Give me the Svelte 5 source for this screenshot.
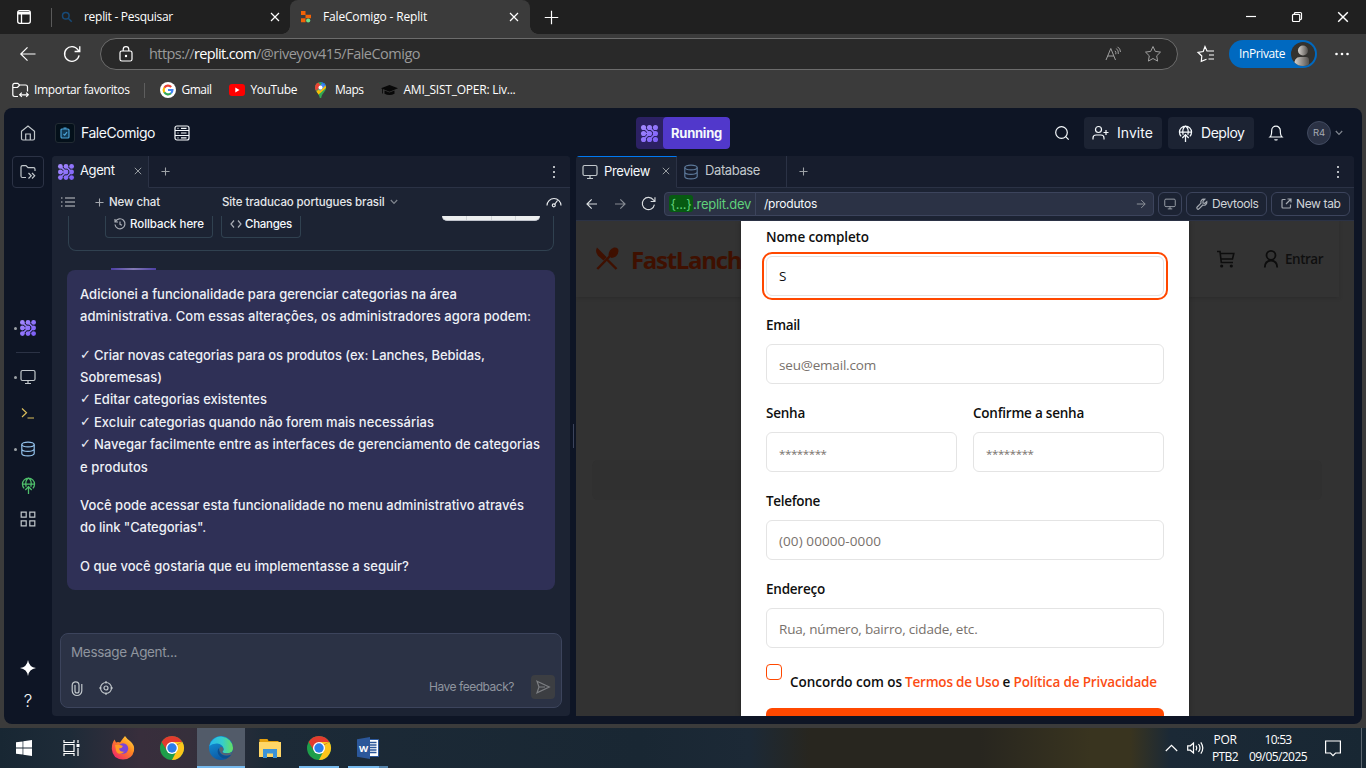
<script>
  // Spreads the letters of a label so that it fills the given width.
  function fit(node, width) {
    if (!width) return;
    node.style.letterSpacing = '0px';
    const natural = node.getBoundingClientRect().width;
    node.style.letterSpacing = `${(width - natural) / [...node.textContent].length}px`;
  }

  const message = [
    [
      ['Adicionei a funcionalidade para gerenciar categorias na área', 377],
      ['administrativa. Com essas alterações, os administradores agora podem:', 451],
    ],
    [
      ['Criar novas categorias para os produtos (ex: Lanches, Bebidas,', 391, true],
      ['Sobremesas)', 82],
      ['Editar categorias existentes', 173, true],
      ['Excluir categorias quando não forem mais necessárias', 340, true],
      ['Navegar facilmente entre as interfaces de gerenciamento de categorias', 446, true],
      ['e produtos', 68],
    ],
    [
      ['Você pode acessar esta funcionalidade no menu administrativo através', 444],
      ['do link "Categorias".', 126],
    ],
    [['O que você gostaria que eu implementasse a seguir?', 329]],
  ];
</script>

{#snippet t(text, width, cls = '')}<span class="t {cls}" use:fit={width}>{text}</span>{/snippet}

{#snippet cross(size)}
  <svg class="ln" width={size} height={size} viewBox="0 0 10 10"><path d="M1 1l8 8M9 1l-8 8" /></svg>
{/snippet}

{#snippet plus(size)}
  <svg class="ln" width={size} height={size} viewBox="0 0 10 10"><path d="M5 .5v9M.5 5h9" /></svg>
{/snippet}

{#snippet agent(size)}
  <svg width={size} height={size} viewBox="0 0 16 16" fill="url(#ag)" stroke="url(#ag)">
    <defs><linearGradient id="ag" gradientUnits="userSpaceOnUse" x1="0" y1="0" x2="16" y2="16"><stop stop-color="#a68cff" /><stop offset="1" stop-color="#7a5cf8" /></linearGradient></defs>
    <path fill="none" stroke-width="1.500" d="M2.400 2.400L8 8l-5.600 5.600M8 2.400L13.600 8 8 13.600M2.400 8H8" />
    <g stroke="none">
      {#each [2.4, 8, 13.6] as y}{#each [2.4, 8, 13.6] as x}<circle cx={x} cy={y} r="2.4" />{/each}{/each}
    </g>
  </svg>
{/snippet}

{#snippet monitor(size)}
  <svg class="ln" width={size} height={size} viewBox="0 0 16 16"><rect x="1" y="1.5" width="14" height="10" rx="1.5" /><path d="M8 11.5v3M5 14.5h6" /></svg>
{/snippet}

{#snippet database(size)}
  <svg class="ln" width={size} height={size} viewBox="0 0 16 16"><ellipse cx="8" cy="3.5" rx="6.2" ry="2.4" /><path d="M1.800 3.500v9c0 1.300 2.800 2.400 6.200 2.400s6.200-1.100 6.200-2.400v-9M1.800 8c0 1.300 2.800 2.400 6.200 2.400s6.200-1.100 6.200-2.400" /></svg>
{/snippet}

{#snippet deploy(size)}
  <svg class="ln" width={size} height={size} viewBox="0 0 16 16"><path d="M3.900 10.700a5.700 5.700 0 1 1 8.200 0M2.400 6.600h11.200M5.800 9.200C4.800 5.500 6 2.400 8 1c2 1.400 3.200 4.500 2.200 8.200M8 16V9M5 12.200L8 9l3 3.200" /></svg>
{/snippet}

{#snippet chevron()}
  <svg class="ln" width="8" height="6" viewBox="0 0 8 6"><path d="M.8 1l3.200 3.400L7.200 1" /></svg>
{/snippet}

{#snippet dots()}
  <svg width="4" height="14" viewBox="0 0 4 14" fill="#b6b9bf"><path d="M1 1h2v2H1zM1 6h2v2H1zM1 11h2v2H1z" /></svg>
{/snippet}

{#snippet arrow(size)}
  <svg class="ln" width={size} height={size} viewBox="0 0 12 12"><path d="M1 6h10M6.300 1.300L11 6l-4.700 4.700" /></svg>
{/snippet}

{#snippet reload(size)}
  <svg class="ln" width={size} height={size} viewBox="0 0 16 16"><path d="M14.300 9.200A6.500 6.500 0 1 1 13.200 4.200L14.800 5.800M14.900 1.200v4.600h-4.600" /></svg>
{/snippet}

{#snippet chrome()}
  <svg width="24" height="24" viewBox="0 0 24 24">
    <circle cx="12" cy="12" r="12" fill="#1e9e4a" />
    <path d="M12 12L1.600 6A12 12 0 0 1 22.400 6z" fill="#e33b2e" />
    <path d="M12 12L22.400 6A12 12 0 0 1 12 24z" fill="#fdc51b" />
    <path d="M7.200 14.700L1.600 6 12 6.200zM16.600 15L12 24 8 20z" fill="#1e9e4a" />
    <path d="M1.600 6l5.600 9L12 6z" fill="#e33b2e" />
    <path d="M12 6h10.400l-5.600 2.500z" fill="#fdc51b" />
    <circle cx="12" cy="12" r="6" fill="#fff" /><circle cx="12" cy="12" r="4.700" fill="#2b7de9" />
  </svg>
{/snippet}

<div class="screen">
  <div class="strip">
    <svg class="ws" width="16" height="16" viewBox="0 0 16 16" fill="none" stroke="#fff" stroke-width="1.300"><rect x="1.700" y="1.700" width="12.600" height="12.600" rx="2" /><path d="M2 3.500h12M2 4.800h12M5.500 5v9" /></svg>
    <i class="vsep"></i>
    <div class="tab idle">
      <svg width="12" height="12" viewBox="0 0 12 12" fill="none" stroke="#174a78" stroke-width="1.500"><circle cx="4.800" cy="4.800" r="3.300" /><path d="M7.200 7.200l3.500 3.500" /></svg>
      {@render t('replit - Pesquisar', 89)}
      <span class="end">{@render cross(10)}</span>
    </div>
    <div class="tab active">
      <svg width="12" height="12" viewBox="0 0 12 12"><path d="M1 0h4.500v4H1zM5.500 3.800H11v3.400H5.500zM1 7.200h4.500v4H1z" fill="#f26207" /><circle cx="8.200" cy="9.500" r="2.100" fill="#6fe08a" /></svg>
      {@render t('FaleComigo - Replit', 104)}
      <span class="end">{@render cross(10)}</span>
    </div>
    <span class="newtab">{@render plus(15)}</span>
    <div class="wc">
      <span><svg class="ln" width="10" height="10" viewBox="0 0 10 10"><path d="M0 4.500h10" /></svg></span>
      <span><svg class="ln" width="10" height="10" viewBox="0 0 10 10"><rect x=".5" y="2.300" width="7.200" height="7.200" rx="1" /><path d="M2.500 2V1.500q0-1 1-1h5q1 0 1 1v5q0 1-1 1H8" /></svg></span>
      <span>{@render cross(12)}</span>
    </div>
  </div>

  <div class="toolbar">
    <svg class="ln" width="16" height="16" viewBox="0 0 16 16"><path d="M15.500 8H1M7.500 1.300L.8 8l6.700 6.700" /></svg>
    <span class="rl">{@render reload(18)}</span>
    <div class="addr">
      <svg class="ln lock" width="14" height="16" viewBox="0 0 14 16"><rect x="1" y="5" width="12" height="10" rx="1.800" /><path d="M4.200 5V3.500a2.800 2.800 0 0 1 5.600 0V5" /><circle cx="7" cy="10" r=".6" fill="#fff" /></svg>
      <div class="url">{@render t('https://', 45)}{@render t('replit.com', 62, 'host')}{@render t('/@riveyov415/FaleComigo', 164)}</div>
      <svg class="ln dim end" width="16" height="16" viewBox="0 0 16 16"><path d="M1 14L5.800 2.500 10.500 14M2.700 10h6.200M10 4.800q1.300 1.300.8 3.500M11.300 2.500q2.500 2 2 5.500M12.500 .8q3 2 3 5.200" /></svg>
      <svg class="ln dim st" width="18" height="18" viewBox="0 0 18 18"><path d="M9 1.500l2.300 4.900 5.200.7-3.800 3.700.9 5.300L9 13.500l-4.600 2.600.9-5.300L1.500 7.100l5.200-.7z" /></svg>
    </div>
    <svg class="ln fav" width="18" height="18" viewBox="0 0 18 18"><path d="M9.500 14.300L4.300 16.300l.5-5.300L1 7.300l5.200-.8L8 1.500l2 4.500h7M12 10h5M11.500 14H17" /></svg>
    <div class="inpriv">{@render t('InPrivate', 46)}
      <svg width="24" height="24" viewBox="0 0 24 24"><defs><linearGradient id="av"><stop stop-color="#d8d4cf" /><stop offset="1" stop-color="#55524f" /></linearGradient><clipPath id="avc"><circle cx="12" cy="12" r="12" /></clipPath></defs><circle cx="12" cy="12" r="12" fill="#33322f" /><g clip-path="url(#avc)" fill="url(#av)"><circle cx="12" cy="8.500" r="5" /><path d="M3 24q0-9 6-9h6q3 0 3 3v6z" /></g></svg>
    </div>
    <svg class="more" width="14" height="4" viewBox="0 0 14 4" fill="#fff"><circle cx="1.500" cy="2" r="1.300" /><circle cx="7" cy="2" r="1.300" /><circle cx="12.500" cy="2" r="1.300" /></svg>
  </div>

  <div class="marks">
    <svg class="ln" width="17" height="16" viewBox="0 0 17 16"><path d="M6 14.500H2.700Q.8 14.500 .8 12.600V3.200Q.8 1.300 2.700 1.300H5.700L7.500 3H13.500q2 0 2 2V9.500M.8 5.500h4.700L7.700 3M7.800 12.800h8.400M9.800 10.700l-2.100 2.100 2.100 2.100M14.200 10.700l2.100 2.100-2.100 2.100" /></svg>
    {@render t('Importar favoritos', 95.5, 'm1')}
    <i class="vsep"></i>
    <svg class="g" width="16" height="16" viewBox="0 0 16 16"><circle cx="8" cy="8" r="8" fill="#fff" /><g fill="none" stroke-width="2.200"><path d="M4.300 5.700A4.400 4.400 0 0 1 11.200 4.900" stroke="#ea4335" /><path d="M4.300 5.700a4.400 4.400 0 0 0 0 4.600" stroke="#fbbc05" /><path d="M4.300 10.300a4.400 4.400 0 0 0 6.700 1" stroke="#34a853" /><path d="M8 8h4.400q0 2-1.400 3.300" stroke="#4285f4" /></g></svg>
    {@render t('Gmail', 30, 'm2')}
    <svg class="yt" width="16" height="12" viewBox="0 0 16 12"><rect width="16" height="12" rx="3" fill="#f00" /><path d="M6.300 3.500v5l4.200-2.500z" fill="#fff" /></svg>
    {@render t('YouTube', 46.500, 'm2')}
    <svg class="mp" width="11" height="16" viewBox="0 0 11 16"><clipPath id="pin"><path d="M5.500 0a5.500 5.500 0 0 1 5.500 5.500C11 9.500 7 11 6.200 16H4.800C4 11 0 9.500 0 5.500A5.500 5.500 0 0 1 5.500 0z" /></clipPath><g clip-path="url(#pin)"><path fill="#34a853" d="M0 0h11v16H0z" /><path fill="#fbbc04" d="M0 11L11 0v6L3 13z" /><path fill="#4285f4" d="M3 6L11-3v6L5 9z" /><path fill="#1a73e8" d="M5 0h6v4z" /><path fill="#ea4335" d="M0 0h3l3 4-6 6z" /></g><circle cx="5.500" cy="5.500" r="2" fill="#fff" /></svg>
    {@render t('Maps', 28.500, 'm3')}
    <svg class="cap" width="17" height="12" viewBox="0 0 17 12" fill="#080808"><path d="M8.500 1L17 4.300 8.500 7.700 0 4.300z" /><path d="M3.500 6.500l5 2 5-2v3.300q-5 2.400-10 0zM1.200 4.500h.8v5h-.8z" /></svg>
    {@render t('AMI_SIST_OPER: Liv...', 112, 'm2')}
  </div>

  <div class="app">
    <header>
      <div class="hl">
        <svg class="ln" width="16" height="16" viewBox="0 0 16 16"><path d="M1.500 6.300L8 1l6.500 5.300v7.200q0 1.500-1.500 1.500H3q-1.500 0-1.500-1.500zM5.700 15V9h4.600v6" /></svg>
        <div class="logo"><svg width="10" height="12" viewBox="0 0 10 12" fill="none" stroke="#4ba3d8" stroke-width="1.200"><rect x="1" y="2" width="8" height="9" rx="1" fill="#123a55" /><path d="M3.500 1.200h3M3.500 7l1.200 1.200L7 5.200" /></svg></div>
        {@render t('FaleComigo', 74)}
        <svg class="ln srv" width="16" height="16" viewBox="0 0 16 16"><rect x="1" y="1" width="14" height="14" rx="2" /><path d="M1 5.500h14M1 10.500h14M3.500 3.300h1M7 3.300h5.500M3.500 8h1M7 8h5.500M3.500 12.800h1M7 12.800h5.500" /></svg>
      </div>
      <div class="run"><span class="ra">{@render agent(17)}</span><span class="rb">{@render t('Running', 51)}</span></div>
      <div class="hr">
        <svg class="ln" width="16" height="16" viewBox="0 0 16 16"><circle cx="7.500" cy="7.500" r="5.800" /><path d="M11.700 11.700l3 3" /></svg>
        <div class="btn inv"><svg class="ln" width="17" height="16" viewBox="0 0 17 16"><circle cx="6.500" cy="4.500" r="3" /><path d="M1 14.500v-1.500q0-3 3-3h5q3 0 3 3v1.500M14 5v5M11.500 7.500h5" /></svg>{@render t('Invite', 36)}</div>
        <div class="btn dep">{@render deploy(17)}{@render t('Deploy', 43.500)}</div>
        <svg class="ln bell" width="14" height="16" viewBox="0 0 14 16"><path d="M1 12h12q-1.700-1.500-1.700-6.500a4.300 4.300 0 0 0-8.600 0Q2.700 10.500 1 12zM5.500 14.500q1.500 1 3 0" /></svg>
        <div class="ava">{@render t('R4', 12)}</div>
        <span class="chev">{@render chevron()}</span>
      </div>
    </header>

    <div class="main">
      <nav>
        <div class="files"><svg class="ln" width="16" height="16" viewBox="0 0 16 16"><path d="M6 13.500H2.500Q1 13.500 1 12V3.200Q1 1.700 2.500 1.700H6l2 2h5.500q1.500 0 1.500 1.500V7M8.500 9l2.700 2.800-2.700 2.700M12 9l2.700 2.800-2.700 2.700" /></svg></div>
        <div class="it a dot">{@render agent(16)}</div>
        <i></i>
        <div class="it b dot">{@render monitor(16)}</div>
        <div class="it c"><svg class="ln" width="16" height="16" viewBox="0 0 16 16"><path d="M2 3.500l4.500 4.300L2 12M7.500 13H14" /></svg></div>
        <div class="it d dot">{@render database(16)}</div>
        <div class="it e">{@render deploy(17)}</div>
        <div class="it f"><svg class="ln" width="16" height="16" viewBox="0 0 16 16"><path d="M1.200 1.200h5v5h-5zM9.800 1.200h5v5h-5zM1.200 9.800h5v5h-5zM9.800 9.800h5v5h-5z" /></svg></div>
        <div class="it g2"><svg width="16" height="16" viewBox="0 0 16 16" fill="#fff"><path d="M8 0q1 7 8 8-7 1-8 8-1-7-8-8 7-1 8-8z" /></svg></div>
        <div class="it h">?</div>
      </nav>

      <section class="agent">
        <div class="ptabs">
          <div class="pt on t1">{@render agent(16)}{@render t('Agent', 34.500)}<span class="end">{@render cross(8)}</span></div>
          <div class="rest"><span class="pl">{@render plus(9)}</span><span class="end kd">{@render dots()}</span></div>
        </div>
        <div class="chatbar">
          <svg class="ln" width="14" height="12" viewBox="0 0 14 12"><path d="M0 2h1.500M4 2h10M0 6h1.500M4 6h10M0 10h1.500M4 10h10" /></svg>
          <span class="np">{@render plus(9)}</span>
          {@render t('New chat', 51)}
          {@render t('Site traducao portugues brasil', 162.500, 'title')}
          <span class="chev">{@render chevron()}</span>
          <svg class="ln end" width="16" height="12" viewBox="0 0 16 12"><path d="M1 9.500a7 7 0 0 1 14 0M8.500 8.500l3-4" /><circle cx="7.800" cy="9.300" r="1.500" /></svg>
        </div>
        <div class="feed">
          <div class="check">
            <div class="cb"><svg class="ln" width="12" height="12" viewBox="0 0 12 12"><path d="M1.500 3.500a5 5 0 1 1-.5 3M1 1v3h3M6 3.500V6.300l2 1" /></svg>{@render t('Rollback here', 74)}</div>
            <div class="cb"><svg class="ln" width="12" height="10" viewBox="0 0 12 10"><path d="M4 1.500L1 5l3 3.500M8 1.500L11 5 8 8.500" /></svg>{@render t('Changes', 47)}</div>
            <div class="shot"><i></i><i></i><i></i></div>
          </div>
          <div class="glow"></div>
          <div class="msg">
            {#each message as lines}
              <p>{#each lines as [text, width, ticked]}<span class="line">{#if ticked}<span class="tick">✓</span>{/if}{@render t(text, width)}</span>{/each}</p>
            {/each}
          </div>
        </div>
        <div class="composer">
          <div class="ph">{@render t('Message Agent...', 106)}</div>
          <div class="crow">
            <svg class="ln" width="12" height="15" viewBox="0 0 12 15"><path d="M4 4v6a2 2 0 0 0 4 0V4.200a3 3 0 0 0-6.800 0v5.500a4.800 4.800 0 0 0 9.600 0V3" /></svg>
            <svg class="ln tg" width="14" height="14" viewBox="0 0 14 14"><circle cx="7" cy="7" r="5.500" /><circle cx="7" cy="7" r="2" /><path d="M7 0v2.500M7 11.500V14M0 7h2.500M11.500 7H14" /></svg>
            {@render t('Have feedback?', 85, 'end hf')}
            <div class="send"><svg class="ln" width="14" height="14" viewBox="0 0 14 14"><path d="M1 1.200L13.300 7 1 12.800 3 7zM3 7h6" /></svg></div>
          </div>
        </div>
      </section>

      <div class="gutter"><i></i></div>

      <section class="preview">
        <div class="ptabs">
          <div class="pt on t2">{@render monitor(16)}{@render t('Preview', 46)}<span class="end">{@render cross(8)}</span></div>
          <div class="pt t3">{@render database(16)}{@render t('Database', 55)}</div>
          <div class="rest"><span class="pl">{@render plus(9)}</span><span class="end kd">{@render dots()}</span></div>
        </div>
        <div class="pbar">
          <span class="bk">{@render arrow(12)}</span>
          <span class="fw">{@render arrow(12)}</span>
          <span class="re">{@render reload(15)}</span>
          <div class="pin">
            <div class="dom"><span class="chip">{@render t('{...}', 21)}</span>{@render t('.replit.dev', 58)}</div>
            {@render t('/produtos', 53, 'path')}
            <span class="go">{@render arrow(10)}</span>
          </div>
          <div class="ob dv">{@render monitor(12)}</div>
          <div class="ob dt"><svg class="ln" width="12" height="12" viewBox="0 0 12 12"><path d="M8 1.200a3 3 0 0 0-3 4L1.200 9a1.200 1.200 0 0 0 1.800 1.800L6.800 7a3 3 0 0 0 4-3.500L8.800 5.300 7 5V3.200L8.800 1.300z" /></svg>{@render t('Devtools', 46.500)}</div>
          <div class="ob nt"><svg class="ln" width="11" height="11" viewBox="0 0 11 11"><path d="M4.500 1.500H2q-1 0-1 1v6.500q0 1 1 1h6.500q1 0 1-1V6.500M6.500 1H10v3.500M10 1L5 6" /></svg>{@render t('New tab', 44.500)}</div>
        </div>
        <div class="page">
          <div class="phead">
            <svg width="24" height="24" viewBox="0 0 24 24"><path fill="#3f1000" d="M2 .5l9.700 9.700-3.200 3.300-5.500-4.800Q-.3 5 2 .5zM13.500 8.500q0-6 5.500-8 4.500-.5 4.500 3.500-.5 6-7 7z" /><path d="M17.500 6.500L2.300 22M11 11.500L21.500 22" stroke="#3f1000" stroke-width="2.400" fill="none" /></svg>
            {@render t('FastLanche', 123, 'brand')}
            <svg class="cart" width="18" height="18" viewBox="0 0 18 18" fill="none" stroke="#0d0d0d" stroke-width="1.600"><path d="M0 1.500h3l1.300 11H16M3.300 3.500h13.500L15.500 9H4" /><circle cx="4.700" cy="16" r=".8" fill="#0d0d0d" /><circle cx="14.300" cy="16" r=".8" fill="#0d0d0d" /></svg>
            <svg class="usr" width="16" height="20" viewBox="0 0 16 20" fill="none" stroke="#0d0d0d" stroke-width="1.800"><circle cx="8" cy="6.300" r="4.500" /><path d="M1.800 18.500q0-6.500 6.200-7 6.200.5 6.200 7" /></svg>
            {@render t('Entrar', 38, 'ent')}
          </div>
          <div class="skel"></div>
          <div class="modal">
            <div class="field"><b>{@render t('Nome completo', 103)}</b><div class="in focus">{@render t('S', 8)}</div></div>
            <div class="field"><b>{@render t('Email', 34)}</b><div class="in">{@render t('seu@email.com', 97)}</div></div>
            <div class="two">
              <div class="field"><b>{@render t('Senha', 39)}</b><div class="in">{@render t('********', 47.500, 'stars')}</div></div>
              <div class="field"><b>{@render t('Confirme a senha', 111)}</b><div class="in">{@render t('********', 47.500, 'stars')}</div></div>
            </div>
            <div class="field"><b>{@render t('Telefone', 54)}</b><div class="in">{@render t('(00) 00000-0000', 102)}</div></div>
            <div class="field"><b>{@render t('Endereço', 59)}</b><div class="in">{@render t('Rua, número, bairro, cidade, etc.', 198.500)}</div></div>
            <div class="agree"><i></i><div>{@render t('Concordo com os', 112)}{@render t('Termos de Uso', 94.500, 'lk')}{@render t('e', 8)}{@render t('Política de Privacidade', 143.500, 'lk')}</div></div>
            <div class="submit"></div>
          </div>
        </div>
      </section>
    </div>
  </div>

  <div class="task">
    <span class="s0"><svg width="16" height="16" viewBox="0 0 16 16" fill="#fff"><path d="M0 2.300l6.600-.9v6.200H0zM7.300 1.300L16 0v7.600H7.300zM0 8.400h6.600v6.200L0 13.700zM7.300 8.400H16V16l-8.700-1.200z" /></svg></span>
    <span class="s1"><svg width="17" height="16" viewBox="0 0 17 16" fill="none" stroke="#fff" stroke-width="1.200"><path d="M1 0v2.500h10V0M1 16v-2.500h10V16M1 4.500h10v7H1zM15 0v3M15 8v8" /><path fill="#fff" stroke="none" d="M13.500 4h3v3h-3z" /></svg></span>
    <span class="s"><svg width="24" height="24" viewBox="0 0 24 24"><defs><linearGradient id="ff" x1="1" x2=".2" y2="1"><stop stop-color="#ffe94a" /><stop offset=".45" stop-color="#ff8a1f" /><stop offset="1" stop-color="#f0246b" /></linearGradient></defs><path fill="url(#ff)" d="M14 0q2 3 5 5 5 4 4 10-2 8.500-11 8.500Q1.500 23 .8 13 .8 7 3.500 3.500L5 6.500q2-1 4 0 2-3 5-6.500z" /><circle cx="12" cy="12.500" r="5.200" fill="#7a45d8" /><path fill="#ff9a24" d="M4 9q4-1 8 1-1 2.500-4 2.500 1 4 6 3-7 5-9-1z" /></svg></span>
    <span class="s">{@render chrome()}</span>
    <span class="s sel"><svg width="24" height="24" viewBox="0 0 24 24"><defs><linearGradient id="e1"><stop stop-color="#27b8ee" /><stop offset=".55" stop-color="#36cdcb" /><stop offset="1" stop-color="#66e060" /></linearGradient><linearGradient id="e2" x1="0" x2=".4" y2="1"><stop stop-color="#149ade" /><stop offset="1" stop-color="#0c59a4" /></linearGradient></defs><circle cx="12" cy="12" r="12" fill="url(#e2)" /><path fill="url(#e1)" d="M.3 10A12 12 0 0 1 24 12q0 5-5 5.300-4.500.2-5.700-1.300 2-1.500 1.200-4Q13 8 8.500 7.500 3 7.200.3 10z" /><path fill="#0d4e8e" d="M10 12q-2.500 3-.5 6.500 3 4.500 8 4Q20 21.500 22 19q-4 1.500-8 .3Q10 17.500 10 12z" /><path fill="#5a6270" d="M13 16q1.500 1.800 6 1.300 2.500-.3 4-1.300L22 18.500q-4 1.700-8 .3-3.500-2-3.600-6 .2-1.500 1.600-2 2 .5 2.500 2.200.1 2-1.500 3z" /></svg></span>
    <span class="s"><svg width="22" height="19" viewBox="0 0 22 19"><path fill="#e5a00d" d="M.5 0h8l1 2h10v5H.5z" /><path fill="#ffd667" d="M0 3h22v15H0z" /><path fill="#3c93d8" d="M4 19v-9h14v9h-4v-4.500H8V19z" /></svg></span>
    <span class="s open"><span>{@render chrome()}</span></span>
    <span class="s open w"><svg width="22" height="22" viewBox="0 0 22 22"><path fill="#fff" stroke="#2b579a" d="M12 2.500h9.500v17H12z" /><path stroke="#2b579a" stroke-width="1.300" d="M13 5.500h6.500M13 8h6.500M13 10.500h6.500M13 13h6.500M13 15.500h6.500" /><path fill="#2b579a" d="M0 2.200L13 0v22L0 19.800z" /><text x="1.900" y="14.800" font-family="Open Sans" font-size="9.500" font-weight="700" fill="#fff">W</text></svg></span>
    <div class="tray">
      <svg class="ln" width="13" height="8" viewBox="0 0 13 8"><path d="M.8 7l5.700-5.700L12.200 7" /></svg>
      <svg class="ln vol" width="17" height="14" viewBox="0 0 17 14"><path d="M.7 4.800h2.600L6.500 2v10L3.300 9.200H.7zM9 4.700q1.500 2.300 0 4.600M11.500 3q3 4 0 8M13.800 1.300q4 5.700 0 11.400" /></svg>
      <div class="lang">{@render t('POR', 23)}{@render t('PTB2', 26)}</div>
      <div class="clock">{@render t('10:53', 27)}{@render t('09/05/2025', 58)}</div>
      <svg class="ln note" width="16" height="17" viewBox="0 0 16 17"><path d="M.6 1h14.800v12H10.500L8 15.700 5.500 13H.6z" /></svg>
      <i class="peek"></i>
    </div>
  </div>
</div>

<style>
  :global(body) { margin: 0; overflow: hidden; background: #3b3b3b; }
  .screen { width: 1366px; height: 768px; display: flex; flex-direction: column; overflow: hidden; background: #3b3b3b; color: #fff; font: 12px/16px "Open Sans", "Noto Sans", sans-serif; }
  .screen :global(*) { box-sizing: border-box; }
  svg { display: block; flex: none; overflow: visible; }
  .ln { fill: none; stroke: currentColor; stroke-width: 1.2; }
  .t { white-space: pre; flex: none; }
  .end { margin-left: auto; }
  i { display: block; flex: none; }

  .strip { height: 34px; flex: none; display: flex; align-items: center; background: #202020; padding-left: 16px; }
  .strip .vsep { width: 1px; height: 19px; margin-left: 19px; background: #5a5a5a; }
  .tab { height: 34px; display: flex; align-items: center; gap: 11px; }
  .idle { width: 238px; padding: 0 10px 0 9px; }
  .active { width: 240px; padding: 0 11px 0 10px; background: #3b3b3b; border-radius: 8px 8px 0 0; position: relative; }
  .active::before, .active::after { content: ''; position: absolute; bottom: 0; width: 8px; height: 8px; }
  .active::before { left: -8px; background: radial-gradient(circle at 0 0, #202020 7.5px, #3b3b3b 8px); }
  .active::after { right: -8px; background: radial-gradient(circle at 100% 0, #202020 7.5px, #3b3b3b 8px); }
  .newtab { margin-left: 14px; }
  .newtab :global(svg) { stroke-width: .8; }
  .wc { margin-left: auto; display: flex; }
  .wc span { width: 46px; display: flex; justify-content: center; align-items: center; }

  .toolbar { height: 40px; flex: none; display: flex; align-items: center; padding-left: 20px; }
  .rl { margin-left: 27px; }
  .addr { width: 1078px; height: 32px; margin-left: 19px; border: 1px solid #6c6c6c; border-radius: 16px; background: #292929; display: flex; align-items: center; padding: 0 15px 0 18px; }
  .url { display: flex; margin-left: 16px; font-size: 14.5px; line-height: 20px; padding-bottom: 1px; color: #9a9a9a; }
  .host { color: #fff; }
  .dim { color: #a0a0a0; stroke-width: 1; }
  .st { margin-left: 23px; }
  .fav { margin-left: 19px; }
  .inpriv { width: 88px; height: 28px; margin-left: 14px; background: #0069c0; border-radius: 14px; display: flex; align-items: center; justify-content: space-between; padding: 0 2px 0 10px; }
  .more { margin-left: 18px; }

  .marks { height: 34px; flex: none; display: flex; align-items: center; padding: 0 0 2px 12px; }
  .m1 { margin-left: 5px; }
  .marks .vsep { width: 1px; height: 15px; margin-left: 14px; background: #5e5e5e; }
  .g { margin-left: 15px; }
  .m2 { margin-left: 6px; }
  .yt { margin-left: 17px; }
  .mp { margin-left: 18px; }
  .m3 { margin-left: 9px; }
  .cap { margin-left: 17px; }

  .app { height: 616px; flex: none; margin: 0 4px; border-radius: 8px; background: #0e1525; color: #f5f9fc; font-family: Inter, "DejaVu Sans", sans-serif; font-size: 13px; overflow: hidden; display: flex; flex-direction: column; }
  header { height: 48px; flex: none; display: grid; grid-template-columns: 1fr auto 1fr; padding-top: 9px; }
  .hl, .hr { height: 32px; display: flex; align-items: center; font-size: 14px; }
  .hl { padding-left: 16px; }
  .hl > svg:first-child { color: #c2c8cc; }
  .logo { width: 20px; height: 20px; margin: 0 6px 0 19px; border: 1px solid #222b33; border-radius: 3px; background: #04101a; display: grid; place-items: center; }
  .srv { margin-left: 19px; }
  .run { width: 94px; height: 32px; display: flex; border-radius: 4px; background: #2c2163; overflow: hidden; }
  .ra { width: 27px; display: grid; place-items: center; }
  .rb { flex: 1; display: grid; place-items: center; background: #5138cb; border-radius: 4px; font-weight: 700; }
  .hr { justify-content: flex-end; padding-right: 19px; }
  .btn { height: 32px; display: flex; align-items: center; background: #1c2333; border-radius: 4px; }
  .inv { width: 78px; margin-left: 14px; padding-left: 8px; gap: 8px; }
  .dep { width: 86px; margin-left: 6px; padding-left: 9px; gap: 7px; }
  .bell { margin-left: 15px; }
  .ava { width: 24px; height: 24px; margin-left: 24px; border: 1px solid #414a60; border-radius: 50%; background: #2b3245; color: #a5aab3; font-size: 9.5px; display: grid; place-items: center; }
  .chev { color: #80868f; margin-left: 4px; }

  .main { flex: 1; display: flex; min-height: 0; padding-bottom: 8px; }
  nav { width: 48px; display: flex; flex-direction: column; align-items: center; color: #c2c8cc; }
  .files { width: 32px; height: 32px; border: 1px solid #2b3245; border-radius: 4px; display: grid; place-items: center; }
  .it { width: 32px; height: 18px; display: grid; place-items: center; position: relative; }
  .dot::before { content: ''; position: absolute; left: 2px; top: 8px; width: 3px; height: 3px; border-radius: 2px; background: #9da2a6; }
  .a { margin-top: 131px; }
  nav > i { width: 24px; height: 1px; margin-top: 15px; background: #2b3245; }
  .b { margin-top: 15px; }
  .c { margin-top: 18px; color: #d9bd5b; }
  .d { margin-top: 18px; color: #93c1ea; }
  .e { margin-top: 18px; color: #4fbf6b; }
  .f { margin-top: 16px; }
  .g2 { margin-top: 131px; }
  .h { margin-top: 15px; font-size: 17px; font-weight: 300; color: #f5f9fc; }

  .agent { width: 518px; background: #1c2333; border-radius: 4px; overflow: hidden; display: flex; flex-direction: column; }
  .ptabs { height: 32px; flex: none; display: flex; }
  .pt { height: 32px; display: flex; align-items: center; gap: 6px; border-right: 1px solid #2b3245; padding: 0 6px; background: #171d2d; border-bottom: 1px solid #2b3245; }
  .pt .t { position: relative; top: -1.5px; }
  .pt.on { background: #1c2333; border-bottom-color: #1c2333; }
  .pt .end { color: #9da2a6; padding-bottom: 2px; }
  .pl { color: #9da2a6; }
  .t1 { width: 97px; }
  .rest { flex: 1; display: flex; align-items: center; background: #171d2d; border-bottom: 1px solid #2b3245; padding: 0 14px 0 11.5px; }
  .chatbar { height: 28px; flex: none; display: flex; align-items: center; padding: 0 8px 0 9px; font-size: 11.5px; font-weight: 500; color: #e4e7ea; }
  .chatbar > svg:first-child { color: #8d929a; stroke-width: 1.6; }
  .np { margin: 0 5px 0 20px; color: #a4a8ae; }
  .title { margin-left: 62px; }
  .chatbar .chev { margin-left: 5px; }
  .feed { height: 408px; flex: none; overflow: hidden; padding: 0 15px; display: flex; flex-direction: column; }
  .check { height: 35px; margin: 0 1px; border: 1px solid #304150; border-top: 0; border-radius: 0 0 8px 8px; display: flex; gap: 8px; padding: 0 13px 0 36px; }
  .cb { height: 22px; border: 1px solid #304150; border-top: 0; border-radius: 0 0 4px 4px; display: flex; align-items: center; padding: 0 8px 5px; gap: 4px; font-size: 11.5px; font-weight: 500; }
  .cb:first-child { width: 108px; }
  .cb:nth-child(2) { width: 80px; gap: 3px; }
  .cb svg { color: #a9adb5; }
  .shot { width: 98px; height: 5px; margin-left: auto; background: #eceeef; border-radius: 0 0 6px 6px; display: flex; justify-content: space-evenly; border-bottom: 1px solid #c0c3cc; }
  .shot i { width: 1px; background: #d0d3d6; }
  .glow { width: 45px; height: 2px; margin: 17px 0 0 44px; background: linear-gradient(90deg, #4d3fa4, #827ab4, #4d3fa4); }
  .msg { height: 320px; flex: none; border-radius: 8px; background: #2f3056; padding: 12.8px 13px; line-height: 22.4px; color: #eef0f6; font-weight: 450; }
  .msg p { margin: 0 0 16px; }
  .line { display: flex; height: 22.4px; }
  .tick { width: 14px; flex: none; font-family: "DejaVu Sans", sans-serif; font-size: 13px; }
  .composer { height: 75px; margin: 9px 8px 0; border: 1px solid #3c445c; border-radius: 8px; background: #2b3245; padding: 9px 6px 8px 10px; display: flex; flex-direction: column; color: #c2c8cc; }
  .ph { color: #8f959f; font-size: 13.5px; line-height: 18px; }
  .crow { display: flex; align-items: center; height: 24px; margin-top: 14px; }
  .crow > svg { position: relative; top: 1px; }
  .tg { margin-left: 16px; }
  .hf { font-size: 12px; color: #8f959f; margin-right: 17px; }
  .send { width: 24px; height: 24px; border-radius: 4px; background: #3c3e42; color: #7c7e82; display: grid; place-items: center; }

  .gutter { width: 6px; display: grid; place-items: center; }
  .gutter i { width: 1px; height: 24px; background: #3c445c; }

  .preview { width: 778px; background: #1c2333; border-radius: 4px 4px 0 0; overflow: hidden; display: flex; flex-direction: column; }
  .t2 { width: 101px; border-top: 1px solid #0079f2; }
  .t2 > :global(svg) { color: #c2c8cc; }
  .t3 { width: 110px; padding-left: 6px; gap: 6px; color: #c2c8cc; }
  .t3 :global(svg) { color: #5c7899; }
  .pbar { height: 33px; flex: none; display: flex; align-items: center; padding: 0 4px 1px 10px; border-bottom: 1px solid #2b3245; color: #d8dcdf; font-size: 12px; }
  .bk :global(svg) { transform: scaleX(-1); }
  .fw { margin-left: 16px; color: #858a92; }
  .re { margin-left: 15px; }
  .pin { width: 490px; height: 24px; margin-left: 8px; border: 1px solid #3c445c; border-radius: 4px; background: #2b3245; display: flex; align-items: center; }
  .dom { height: 22px; width: 91px; padding-left: 4px; border-right: 1px solid #3c445c; display: flex; align-items: center; font-size: 13px; color: #5fd07a; }
  .chip { width: 24px; height: 17px; border-radius: 3px; background: #075a12; display: grid; place-items: center; }
  .path { margin-left: 8px; color: #f5f9fc; }
  .go { margin-left: auto; margin-right: 7px; color: #8d929a; }
  .ob { height: 24px; margin-left: 4px; border: 1px solid #3c445c; border-radius: 6px; display: flex; align-items: center; gap: 4px; color: #d0d4d8; }
  .ob :global(svg) { color: #a4a9b1; }
  .dv { width: 24px; padding-left: 5px; }
  .dt { width: 81px; padding-left: 9px; }
  .nt { width: 79px; padding-left: 9px; }

  .page { flex: 1; position: relative; overflow: hidden; background: #323232; font-family: "Open Sans", "Noto Sans", sans-serif; color: #0f0f0f; font-size: 14px; line-height: 20px; }
  .phead { width: 763px; height: 76px; display: flex; align-items: center; padding: 0 16px 0 19px; background: #333; box-shadow: 0 1px 3px #2c2c2c; }
  .brand { margin-left: 12px; font-size: 24px; line-height: 32px; font-weight: 700; color: #3f1000; padding-top: 2px; }
  .cart { margin-left: auto; margin-right: 28px; }
  .usr { margin-right: 6px; }
  .ent { font-weight: 600; font-size: 13.5px; }
  .skel { height: 40px; width: 730px; margin: 163px 0 0 16px; border-radius: 6px; background: #303030; }
  .modal { position: absolute; left: 165px; top: 0; width: 448px; height: 495px; background: #fff; padding: 6px 25px 0; box-shadow: 0 0 4px #222; }
  .field { margin-bottom: 19px; }
  .field b { display: block; height: 20px; margin-bottom: 9px; font-weight: 600; font-size: 13.5px; }
  .in { height: 40px; border: 1px solid #e4e4e4; border-radius: 6px; padding: 2px 0 0 12px; display: flex; align-items: center; color: #78716c; font-size: 13.5px; }
  .stars { font-size: 11.5px; padding-top: 2px; }
  .focus { color: #0f0f0f; outline: 2px solid #ff4800; outline-offset: 2px; padding-top: 0; }
  .two { display: grid; grid-template-columns: 1fr 1fr; gap: 16px; }
  .agree { height: 44px; display: flex; gap: 8px; margin-top: -3px; font-weight: 600; font-size: 13.5px; }
  .agree i { width: 16px; height: 16px; border: 1px solid #ff4800; border-radius: 4px; }
  .agree > div { display: flex; gap: 3px; padding-top: 8px; }
  .lk { color: #fb4d14; }
  .submit { height: 40px; border-radius: 6px; background: #ff4800; }

  .task { height: 40px; flex: none; margin-top: 4px; display: flex; background: linear-gradient(90deg, #182733 0, #1e2b38 70px, #382e3c 140px, #362f3b 190px, #1c2a37 270px, #192733 640px, #1c2936 750px, #28261f 810px, #28261f 980px, #39341f 1090px, #39341f 1130px, #1b2936 1170px, #182733 1366px); }
  .s0, .s1, .s { height: 40px; display: grid; place-items: center; position: relative; }
  .s0, .s1 { width: 48px; }
  .s1 { margin-right: 3px; }
  .s1 svg { margin-right: 1px; }
  .s { width: 48px; margin-right: 1px; }
  .sel { background: #525b69; }
  .sel::after { content: ''; position: absolute; left: 0; right: 0; bottom: 0; height: 2px; background: #76b9ed; }
  .open::after { content: ''; position: absolute; left: 4px; right: 4px; bottom: 0; height: 2px; background: #76b9ed; }
  .w::after { background: linear-gradient(90deg, #76b9ed 31px, #5483ab 31px); }
  .tray { margin-left: auto; display: flex; align-items: center; padding-right: 4px; }
  .vol { margin-left: 9px; }
  .lang, .clock { display: flex; flex-direction: column; align-items: center; line-height: 17px; }
  .lang { width: 26px; margin-left: 8px; }
  .clock { width: 58px; margin-left: 11px; }
  .note { margin-left: 18px; }
  .peek { width: 1px; height: 40px; margin-left: 20px; background: #5c6670; }
</style>
